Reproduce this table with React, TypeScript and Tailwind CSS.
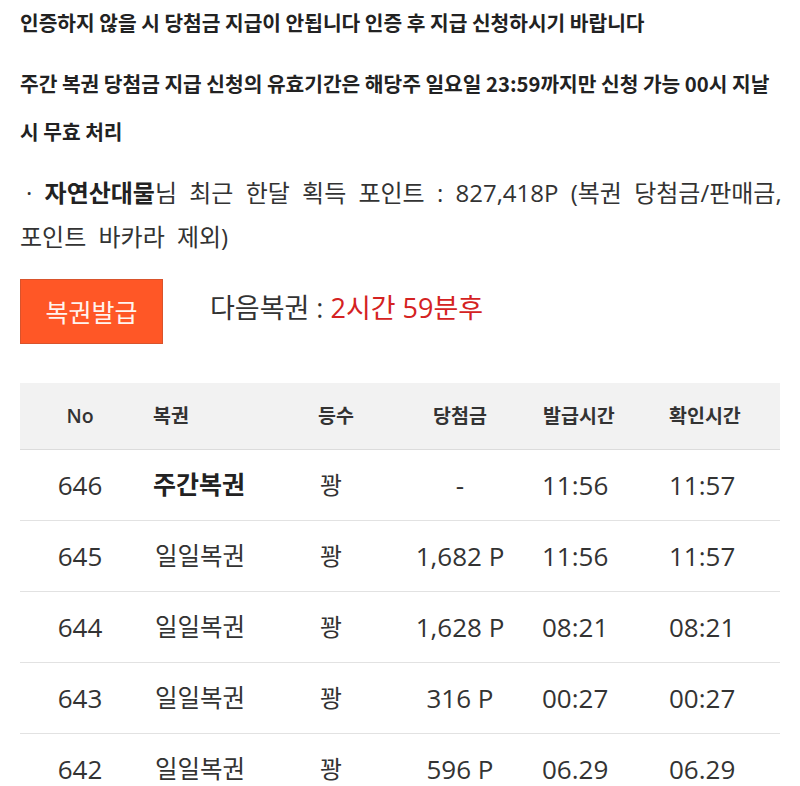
const rows = [
  {no: "646", name: "주간복권", weekly: true, rank: "꽝", prize: "-", issued: "11:56", checked: "11:57"},
  {no: "645", name: "일일복권", rank: "꽝", prize: "1,682 P", issued: "11:56", checked: "11:57"},
  {no: "644", name: "일일복권", rank: "꽝", prize: "1,628 P", issued: "08:21", checked: "08:21"},
  {no: "643", name: "일일복권", rank: "꽝", prize: "316 P", issued: "00:27", checked: "00:27"},
  {no: "642", name: "일일복권", rank: "꽝", prize: "596 P", issued: "06.29", checked: "06.29"},
]

const COLS = "grid grid-cols-[120px_165px_95px_120px_130px_130px] items-center"

export default function App() {
  return (
    <div className="h-[786px] w-full overflow-hidden bg-white px-[20px] text-[#333] [font-family:'Open_Sans','Noto_Sans_CJK_KR',sans-serif]">
      {/* notices */}
      <p className="whitespace-nowrap text-[20.3px] leading-[44px] font-bold text-[#222] [font-family:'Noto_Sans_CJK_KR',sans-serif]">
        인증하지 않을 시 당첨금 지급이 안됩니다 인증 후 지급 신청하시기 바랍니다
      </p>
      <p className="mt-[15px] whitespace-nowrap text-[20.3px] leading-[48px] font-bold text-[#222] [font-family:'Noto_Sans_CJK_KR',sans-serif]">
        주간 복권 당첨금 지급 신청의 유효기간은 해당주 일요일 23:59까지만 신청 가능 00시 지날
        <br />시 무효 처리
      </p>

      {/* monthly points */}
      <p className="mt-[16px] whitespace-nowrap text-[24px] leading-[44px] text-[#333] [word-spacing:6px]">
        <span className="ml-[6px]">·</span> <b className="font-bold text-[#222]">자연산대물</b>님 최근 한달 획득 포인트 : 827,418P (복권 당첨금/판매금,
        <br />포인트 바카라 제외)
      </p>

      {/* issue button + countdown */}
      <div className="mt-[20px] flex items-center">
        <button
          type="button"
          className="flex h-[65px] w-[143px] items-center justify-center border border-[#d9532c] bg-[#ff5726] text-[25px] text-[#fff4ef] [font-family:'Noto_Sans_CJK_KR',sans-serif]"
        >
          복권발급
        </button>
        <div className="ml-[47px] -mt-[6px] text-[27px] text-[#333]">
          다음복권 : <span className="text-[#d42222]">2시간 59분후</span>
        </div>
      </div>

      {/* ticket list */}
      <div className="mt-[39px]">
        <div className={`${COLS} h-[67px] border-b border-[#dcdcdc] bg-[#f2f2f2] text-[19.5px] font-semibold text-[#333]`}>
          <div className="text-center">No</div>
          <div className="pl-[13px]">복권</div>
          <div className="pl-[13px]">등수</div>
          <div className="text-center">당첨금</div>
          <div className="pl-[23px]">발급시간</div>
          <div className="pl-[19px]">확인시간</div>
        </div>
        {rows.map((r) => (
          <div key={r.no} className={`${COLS} h-[71px] border-b border-[#e2e2e2] text-[26px] text-[#333]`}>
            <div className="text-center">{r.no}</div>
            <div className={r.weekly ? "pl-[13px] text-[25px] font-bold text-[#222]" : "pl-[15px] text-[24.5px]"}>
              {r.name}
            </div>
            <div className="pl-[15px] text-[24px]">{r.rank}</div>
            <div className="text-center">{r.prize}</div>
            <div className="pl-[22px]">{r.issued}</div>
            <div className="pl-[19px]">{r.checked}</div>
          </div>
        ))}
      </div>
    </div>
  )
}
